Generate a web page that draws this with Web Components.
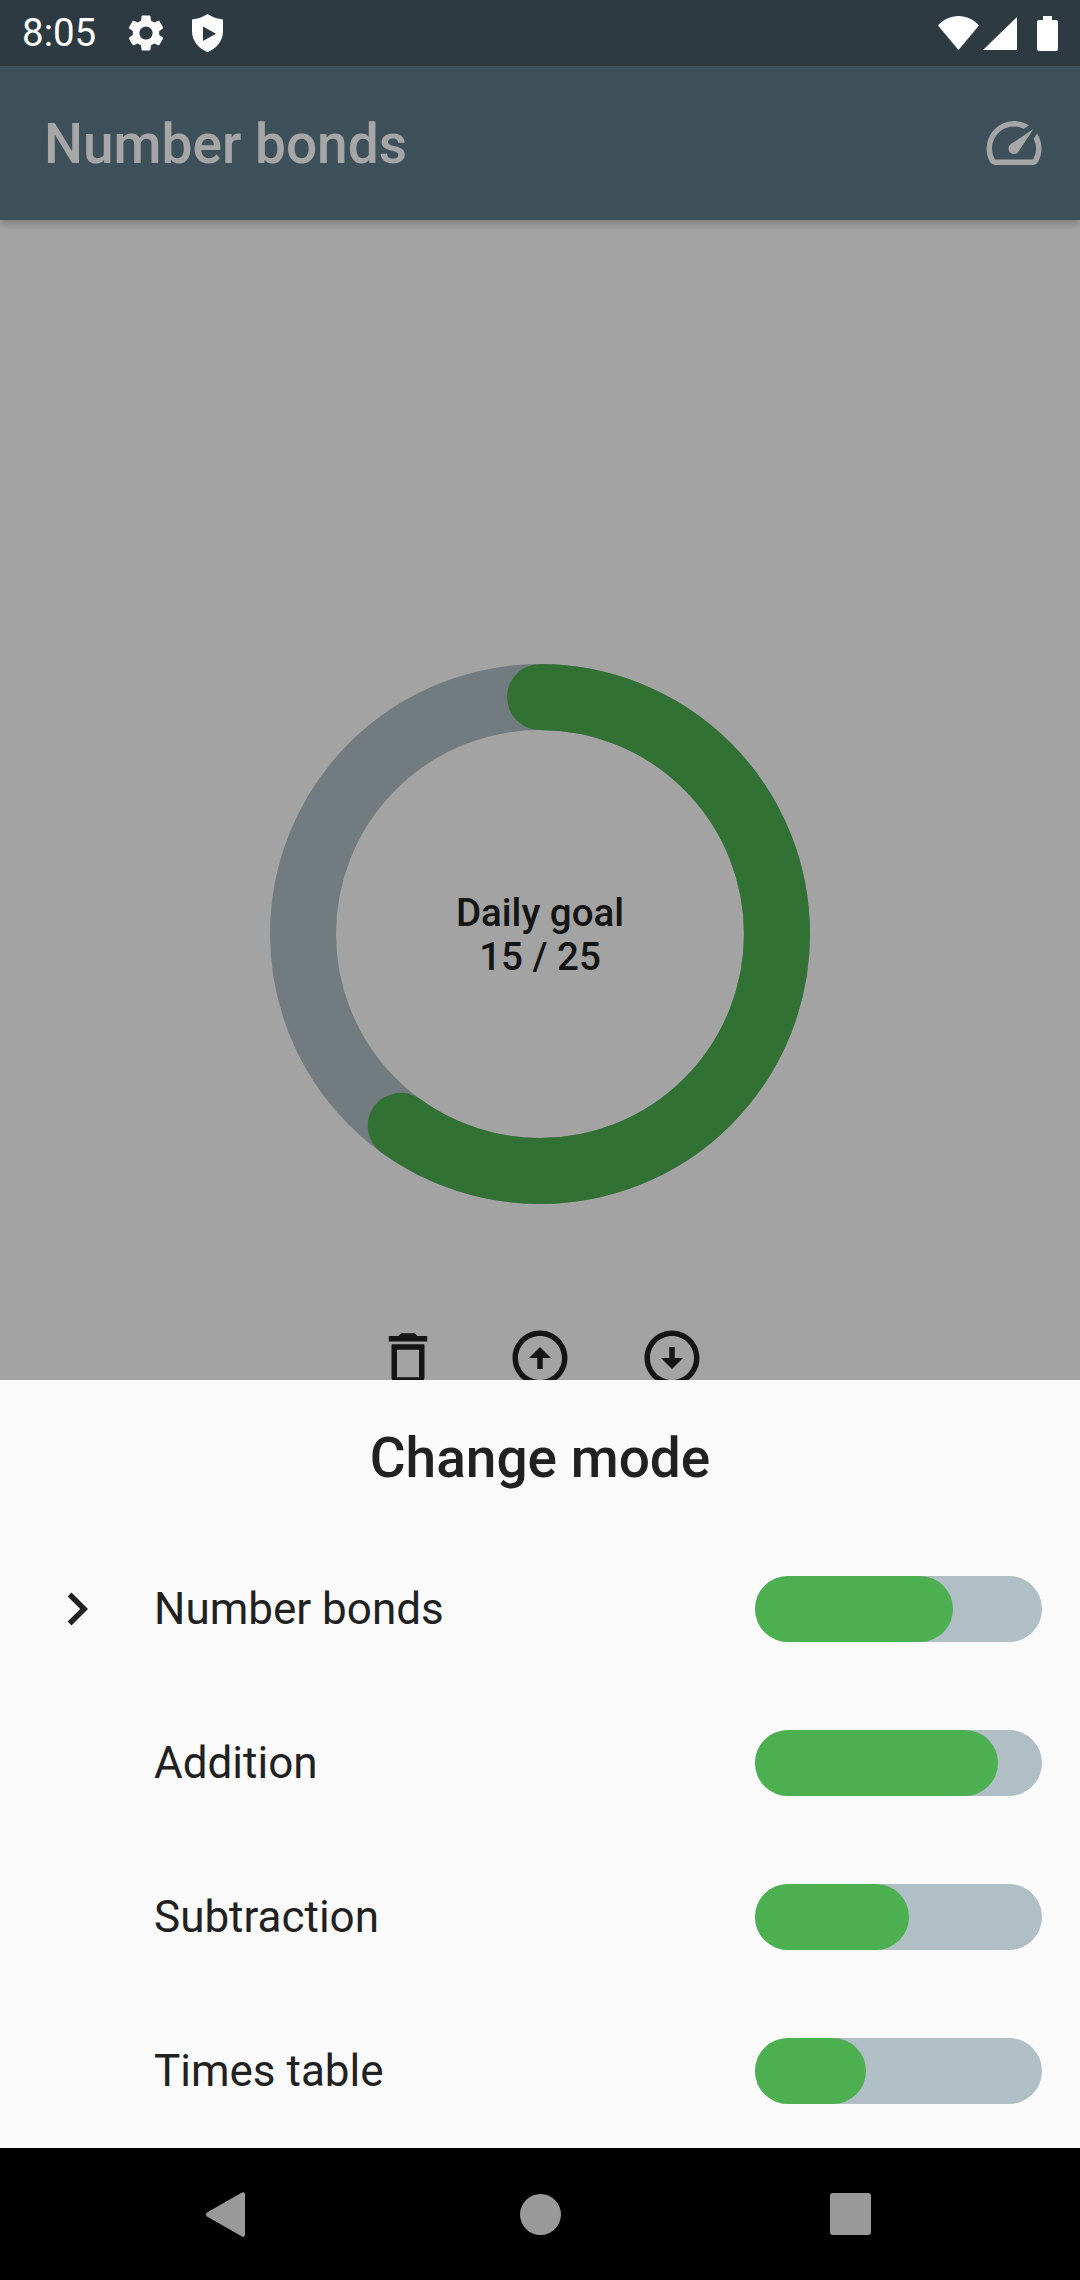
<!DOCTYPE html>
<html>
<head>
<meta charset="utf-8">
<title>Number bonds</title>
<style>
  html, body { margin: 0; height: 100%; background: #000; }
  body { font-family: Roboto, "Noto Sans", sans-serif; }
</style>
</head>
<body>
<app-shell>
  <status-bar slot="status" time="8:05"></status-bar>
  <app-bar slot="screen">Number bonds</app-bar>
  <goal-ring slot="screen" done="15" total="25">Daily goal</goal-ring>
  <action-row slot="screen"></action-row>
  <mode-sheet slot="sheet" heading="Change mode">
    <mode-row current value="69.2">Number bonds</mode-row>
    <mode-row value="84.6">Addition</mode-row>
    <mode-row value="53.8">Subtraction</mode-row>
    <mode-row value="38.5">Times table</mode-row>
  </mode-sheet>
  <nav-bar slot="nav"></nav-bar>
</app-shell>

<script>
// material icon paths, 24 unit box
const ICONS = {
  settings: "M19.14 12.94c.04-.3.06-.61.06-.94 0-.32-.02-.64-.07-.94l2.03-1.58c.18-.14.23-.41.12-.61l-1.92-3.32c-.12-.22-.37-.29-.59-.22l-2.39.96c-.5-.38-1.03-.7-1.62-.94l-.36-2.54c-.04-.24-.24-.41-.48-.41h-3.84c-.24 0-.43.17-.47.41l-.36 2.54c-.59.24-1.13.57-1.62.94l-2.39-.96c-.22-.08-.47 0-.59.22L2.74 8.87c-.12.21-.08.47.12.61l2.03 1.58c-.05.3-.09.63-.09.94s.02.64.07.94l-2.03 1.58c-.18.14-.23.41-.12.61l1.92 3.32c.12.22.37.29.59.22l2.39-.96c.5.38 1.03.7 1.62.94l.36 2.54c.05.24.24.41.48.41h3.84c.24 0 .44-.17.47-.41l.36-2.54c.59-.24 1.13-.56 1.62-.94l2.39.96c.22.08.47 0 .59-.22l1.92-3.32c.12-.22.07-.47-.12-.61l-2.01-1.58zM12 15.6c-1.98 0-3.6-1.62-3.6-3.6s1.62-3.6 3.6-3.6 3.6 1.62 3.6 3.6-1.62 3.6-3.6 3.6z",
  speed: "M20.38 8.57l-1.23 1.85a8 8 0 0 1-.22 7.58H5.07A8 8 0 0 1 15.58 6.85l1.85-1.23A10 10 0 0 0 3.35 19a2 2 0 0 0 1.72 1h13.85a2 2 0 0 0 1.74-1 10 10 0 0 0-.27-10.44zm-9.79 6.84a2 2 0 0 0 2.83 0l5.66-8.49-8.49 5.66a2 2 0 0 0 0 2.83z",
  trash: "M6 19c0 1.1.9 2 2 2h8c1.1 0 2-.9 2-2V7H6v12zM8 9h8v10H8V9zm7.5-5l-1-1h-5l-1 1H5v2h14V4z",
  up: "M12 20c-4.41 0-8-3.59-8-8s3.59-8 8-8 8 3.59 8 8-3.59 8-8 8m0 2c5.52 0 10-4.48 10-10S17.52 2 12 2 2 6.48 2 12s4.48 10 10 10zm-1-10v4h2v-4h3l-4-4-4 4h3z",
  down: "M12 4c4.41 0 8 3.59 8 8s-3.59 8-8 8-8-3.59-8-8 3.59-8 8-8m0-2C6.48 2 2 6.48 2 12s4.48 10 10 10 10-4.48 10-10S17.52 2 12 2zm1 10V8h-2v4H8l4 4 4-4h-3z",
  chevron: "M10 6L8.59 7.41 13.17 12l-4.58 4.59L10 18l6-6z"
};
const icon = (name, size, color) => `<svg width="${size}" height="${size}" viewBox="0 0 24 24" style="display:block;flex:0 0 auto"><path fill="${color}" fill-rule="evenodd" d="${ICONS[name]}"/></svg>`;

class AppShell extends HTMLElement {
  constructor() { super(); this.attachShadow({ mode: "open" }); }
  connectedCallback() {
    this.shadowRoot.innerHTML = `
      <style>
        :host{display:flex;flex-direction:column;width:1080px;height:2280px;overflow:hidden}
        .screen{position:relative;flex:1;min-height:0;display:flex;flex-direction:column;background:#fafafa;overflow:hidden}
        .scrim{position:absolute;inset:0;background:rgba(0,0,0,.35)}
        .sheet{position:absolute;left:0;right:0;bottom:0}
      </style>
      <slot name="status"></slot>
      <div class="screen">
        <slot name="screen"></slot>
        <div class="scrim"></div>
        <div class="sheet"><slot name="sheet"></slot></div>
      </div>
      <slot name="nav"></slot>`;
  }
}

class StatusBar extends HTMLElement {
  constructor() { super(); this.attachShadow({ mode: "open" }); }
  connectedCallback() {
    this.shadowRoot.innerHTML = `
      <style>
        :host{display:flex;align-items:center;height:66px;flex:0 0 auto;background:#2d3a41;color:#fff;padding:0 22px;box-sizing:border-box;font:400 38.5px/66px Roboto,sans-serif}
        .time{width:102px}
        .gear{margin-right:24px}
        .end{margin-left:auto;display:flex;align-items:center;gap:4px}
      </style>
      <span class="time">${this.getAttribute("time")}</span>
      <span class="gear">${icon("settings", 44, "#fff")}</span>
      <svg width="31" height="38" viewBox="0 0 31 38"><path fill="#fff" fill-rule="evenodd" d="M15.5 0C20 3 25.500 5 31 5.500V17C31 27 24.500 34.500 15.500 38 6.500 34.500 0 27 0 17V5.500C5.500 5 11 3 15.500 0ZM11 12.500V27L24 19.700Z"/></svg>
      <div class="end">
        <svg width="41" height="34" viewBox="0 0 41 34"><path fill="#fff" d="M20.500 34L0 9.500C5.500 3.500 12.500 0 20.500 0S35.500 3.500 41 9.500Z"/></svg>
        <svg width="34" height="33" viewBox="0 0 34 33"><path fill="#fff" d="M34 0V33H0Z"/></svg>
        <svg width="21" height="35" viewBox="0 0 21 35" style="margin-left:16px"><path fill="#fff" d="M6 0H15V4H19C20.100 4 21 4.900 21 6V33C21 34.100 20.100 35 19 35H2C.9 35 0 34.100 0 33V6C0 4.900 .9 4 2 4H6Z"/></svg>
      </div>`;
  }
}

class AppBar extends HTMLElement {
  constructor() { super(); this.attachShadow({ mode: "open" }); }
  connectedCallback() {
    this.shadowRoot.innerHTML = `
      <style>
        :host{display:flex;align-items:center;justify-content:space-between;flex:0 0 auto;height:154px;box-sizing:border-box;padding:0 33.5px 0 44px;background:#607d8b;color:#fff;font:500 55px Roboto,sans-serif;box-shadow:0 4px 8px rgba(0,0,0,.22)}
        .title{padding-top:2px}
      </style>
      <div class="title"><slot></slot></div>
      ${icon("speed", 66, "#fff")}`;
  }
}

class GoalRing extends HTMLElement {
  constructor() { super(); this.attachShadow({ mode: "open" }); }
  connectedCallback() {
    const done = +this.getAttribute("done"), total = +this.getAttribute("total");
    this.shadowRoot.innerHTML = `
      <style>
        :host{display:grid;place-items:center;flex:0 0 auto;width:540px;height:540px;margin:444px auto 0}
        svg,.label{grid-area:1/1}
        svg{display:block}
        .label{text-align:center;padding-top:1px;color:#212121;font:500 38.5px/44px Roboto,sans-serif}
      </style>
      <svg width="540" height="540" viewBox="0 0 540 540">
        <circle cx="270" cy="270" r="237" fill="none" stroke="#b0bec5" stroke-width="66"/>
        <circle cx="270" cy="270" r="237" fill="none" stroke="#4caf50" stroke-width="66" stroke-linecap="round"
          pathLength="100" stroke-dasharray="${done / total * 100} 100" transform="rotate(-90 270 270)"/>
      </svg>
      <div class="label"><slot></slot><br>${done} / ${total}</div>`;
  }
}

class ActionRow extends HTMLElement {
  constructor() { super(); this.attachShadow({ mode: "open" }); }
  connectedCallback() {
    this.shadowRoot.innerHTML = `
      <style>
        :host{display:flex;justify-content:center;flex:0 0 auto;margin-top:88px}
        button{all:unset;display:flex;align-items:center;justify-content:center;width:132px;height:132px}
      </style>
      ${["trash", "up", "down"].map((n) => `<button>${icon(n, 66, "#212121")}</button>`).join("")}`;
  }
}

class ModeSheet extends HTMLElement {
  constructor() { super(); this.attachShadow({ mode: "open" }); }
  connectedCallback() {
    this.shadowRoot.innerHTML = `
      <style>
        :host{display:block;background:#fafafa}
        h2{margin:0;height:152px;box-sizing:border-box;padding-top:45.5px;text-align:center;color:#212121;font:500 55px/64px Roboto,sans-serif}
      </style>
      <h2>${this.getAttribute("heading")}</h2>
      <slot></slot>`;
  }
}

class ModeRow extends HTMLElement {
  constructor() { super(); this.attachShadow({ mode: "open" }); }
  connectedCallback() {
    this.shadowRoot.innerHTML = `
      <style>
        :host{display:flex;align-items:center;height:154px;box-sizing:border-box;padding:0 38.3px 0 44px;color:#212121;font:400 44px Roboto,sans-serif}
        .mark{width:66px;height:66px;margin-right:44px;flex:0 0 auto}
        .name{flex:1;min-width:0}
        .track{width:286.4px;height:66px;border-radius:33px;background:#b0bec5;flex:0 0 auto}
        .fill{height:100%;border-radius:33px;background:#4caf50;width:${this.getAttribute("value")}%}
      </style>
      <div class="mark">${this.hasAttribute("current") ? icon("chevron", 66, "#212121") : ""}</div>
      <div class="name"><slot></slot></div>
      <div class="track"><div class="fill"></div></div>`;
  }
}

class NavBar extends HTMLElement {
  constructor() { super(); this.attachShadow({ mode: "open" }); }
  connectedCallback() {
    this.shadowRoot.innerHTML = `
      <style>
        :host{display:flex;align-items:center;height:132px;flex:0 0 auto;background:#000;padding-left:206px;box-sizing:border-box}
        svg{display:block;flex:0 0 auto}
        .home{margin:0 269px 0 275px}
      </style>
      <svg width="39" height="45" viewBox="0 0 39 45"><path fill="#999" d="M35.500 .8C37-.4 39 .3 39 2.500V42.500C39 44.700 37 45.400 35.500 44.200L1 24.500C-.3 23.500-.3 21.500 1 20.500Z"/></svg>
      <svg class="home" width="41" height="41" viewBox="0 0 41 41"><circle cx="20.500" cy="20.500" r="20.500" fill="#999"/></svg>
      <svg width="41" height="42" viewBox="0 0 41 42"><rect width="41" height="42" rx="3" fill="#999"/></svg>`;
  }
}

customElements.define("app-shell", AppShell);
customElements.define("status-bar", StatusBar);
customElements.define("app-bar", AppBar);
customElements.define("goal-ring", GoalRing);
customElements.define("action-row", ActionRow);
customElements.define("mode-sheet", ModeSheet);
customElements.define("mode-row", ModeRow);
customElements.define("nav-bar", NavBar);
</script>
</body>
</html>
